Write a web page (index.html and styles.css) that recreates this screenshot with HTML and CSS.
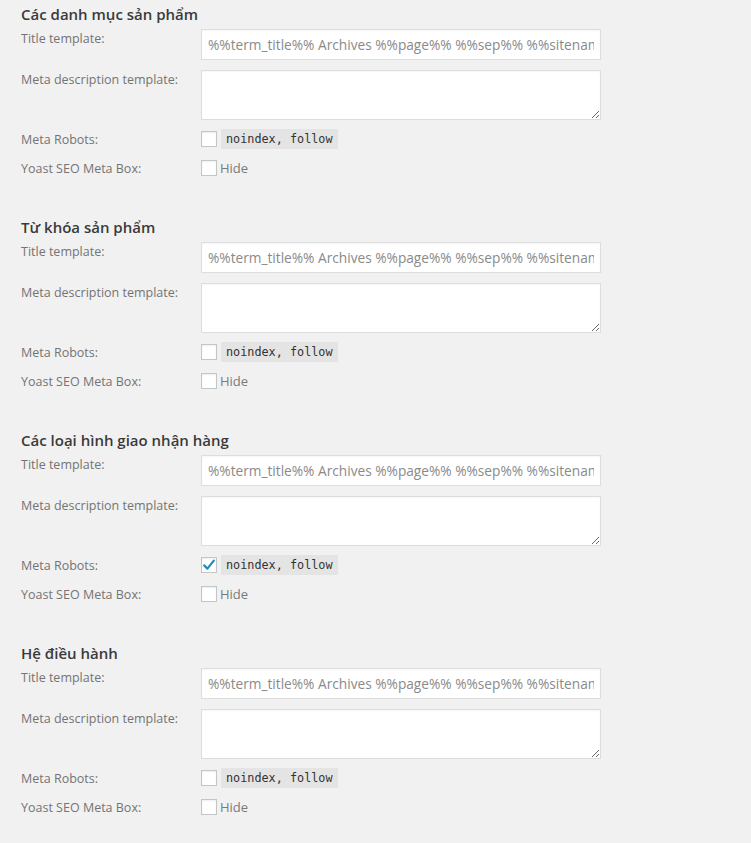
FILE: index.html
```html
<!DOCTYPE html>
<html>

<head>
	<meta charset="utf-8">
	<title>Taxonomies - Yoast SEO</title>
	<link rel="stylesheet" href="styles.css">
</head>

<body>
	<div class="wrap">

		<div class="tax-section">
			<h3>Các danh mục sản phẩm</h3>
			<div class="row row-input">
				<label>Title template:</label>
				<input type="text" class="field" value="%%term_title%% Archives %%page%% %%sep%% %%sitename%%">
			</div>
			<div class="row row-area">
				<label>Meta description template:</label>
				<textarea class="field area"></textarea>
			</div>
			<div class="row row-check">
				<label>Meta Robots:</label>
				<span class="box"></span>
				<code>noindex, follow</code>
			</div>
			<div class="row row-check row-hide">
				<label>Yoast SEO Meta Box:</label>
				<span class="box"></span>
				<span class="hide">Hide</span>
			</div>
		</div>

		<div class="tax-section">
			<h3>Từ khóa sản phẩm</h3>
			<div class="row row-input">
				<label>Title template:</label>
				<input type="text" class="field" value="%%term_title%% Archives %%page%% %%sep%% %%sitename%%">
			</div>
			<div class="row row-area">
				<label>Meta description template:</label>
				<textarea class="field area"></textarea>
			</div>
			<div class="row row-check">
				<label>Meta Robots:</label>
				<span class="box"></span>
				<code>noindex, follow</code>
			</div>
			<div class="row row-check row-hide">
				<label>Yoast SEO Meta Box:</label>
				<span class="box"></span>
				<span class="hide">Hide</span>
			</div>
		</div>

		<div class="tax-section">
			<h3>Các loại hình giao nhận hàng</h3>
			<div class="row row-input">
				<label>Title template:</label>
				<input type="text" class="field" value="%%term_title%% Archives %%page%% %%sep%% %%sitename%%">
			</div>
			<div class="row row-area">
				<label>Meta description template:</label>
				<textarea class="field area"></textarea>
			</div>
			<div class="row row-check">
				<label>Meta Robots:</label>
				<span class="box checked">
					<svg width="14" height="14" viewBox="0 0 14 14"><path d="M2.2 7.4 L5.4 10.6 L11.8 2.6" fill="none" stroke="#1e8cbe" stroke-width="2.2" stroke-linecap="round" stroke-linejoin="round"/></svg>
				</span>
				<code>noindex, follow</code>
			</div>
			<div class="row row-check row-hide">
				<label>Yoast SEO Meta Box:</label>
				<span class="box"></span>
				<span class="hide">Hide</span>
			</div>
		</div>

		<div class="tax-section">
			<h3>Hệ điều hành</h3>
			<div class="row row-input">
				<label>Title template:</label>
				<input type="text" class="field" value="%%term_title%% Archives %%page%% %%sep%% %%sitename%%">
			</div>
			<div class="row row-area">
				<label>Meta description template:</label>
				<textarea class="field area"></textarea>
			</div>
			<div class="row row-check">
				<label>Meta Robots:</label>
				<span class="box"></span>
				<code>noindex, follow</code>
			</div>
			<div class="row row-check row-hide">
				<label>Yoast SEO Meta Box:</label>
				<span class="box"></span>
				<span class="hide">Hide</span>
			</div>
		</div>

	</div>
</body>

</html>
```

FILE: styles.css
```css
html,
body {
	margin: 0;
	background: #f1f1f1;
}

body {
	font-family: "Open Sans", "Noto Sans", sans-serif;
	font-size: 12.5px;
	color: #747474;
}

.wrap {
	padding: 0 0 0 21px;
}

.tax-section {
	height: 213px;
}

h3 {
	margin: 0;
	padding-top: 2px;
	font-size: 15px;
	line-height: 25px;
	font-weight: 600;
	color: #3a3a3a;
}

.row {
	display: flex;
}

.row label {
	flex: none;
	width: 180px;
	line-height: 20px;
}

.row-check label {
	padding-top: 2px;
}

.row-input {
	margin-top: 2px;
}

.field {
	box-sizing: border-box;
	width: 400px;
	margin: 0;
	border: 1px solid #ddd;
	background: #fff;
	box-shadow: inset 0 1px 2px rgba(0, 0, 0, 0.04);
	font-family: "Open Sans", "Noto Sans", sans-serif;
	font-size: 13.7px;
	color: #8a8a8a;
	outline: none;
}

input.field {
	height: 31px;
	padding: 0 6px;
}

.row-area {
	margin-top: 10px;
}

.area {
	height: 50px;
	resize: vertical;
	display: block;
}

.row-check {
	align-items: center;
	height: 20px;
	margin-top: 9px;
}

.row-hide {
	margin-top: 9px;
}

.box {
	box-sizing: border-box;
	width: 16px;
	height: 16px;
	border: 1px solid #c3c6c9;
	background: #fff;
	box-shadow: inset 0 1px 2px rgba(0, 0, 0, 0.07);
	display: flex;
	align-items: center;
	justify-content: center;
}

.box svg {
	display: block;
	margin-top: -1px;
}

code {
	margin-left: 4px;
	padding: 0 5px;
	height: 20px;
	line-height: 20px;
	background: #e4e4e4;
	font-family: "DejaVu Sans Mono", monospace;
	font-size: 11.8px;
	color: #333;
}

.hide {
	margin-left: 3px;
	font-size: 13px;
	color: #7a7a7a;
	line-height: 20px;
}
```
